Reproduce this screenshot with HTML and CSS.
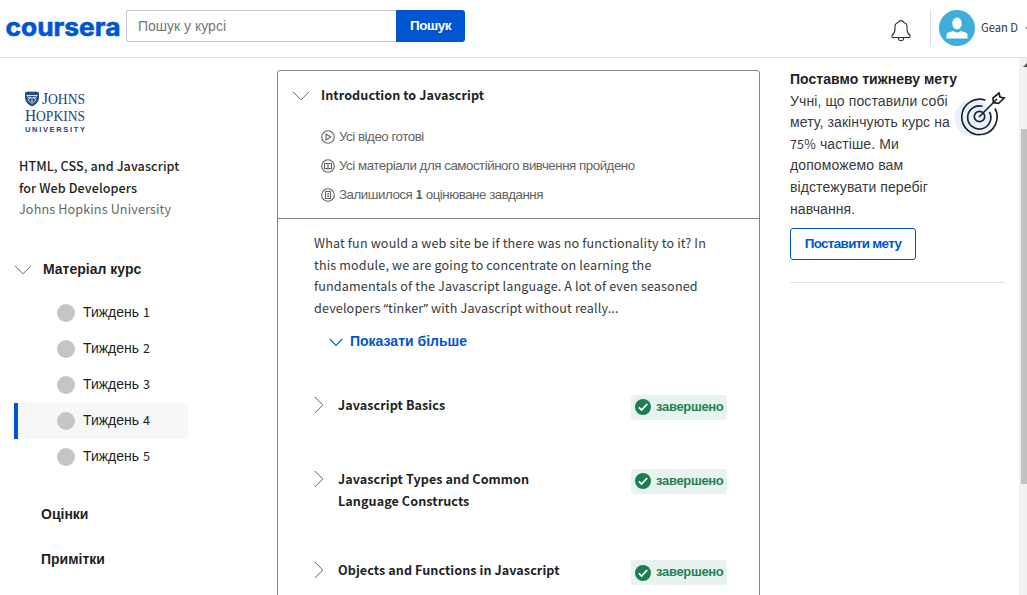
FILE: index.html
```html
<!DOCTYPE html>
<html lang="uk">
<head>
<meta charset="utf-8">
<title>Coursera</title>
<link rel="stylesheet" href="styles.css">
</head>
<body>
<header class="header">
  <svg class="logo" width="116" height="28" viewBox="0 0 116 28"><text x="-.5" y="22.500" textLength="115" lengthAdjust="spacingAndGlyphs">coursera</text></svg>
  <form class="search">
    <div class="search-box">Пошук у курсі</div>
    <div class="search-btn">Пошук</div>
  </form>
  <svg class="bell" width="20" height="22" viewBox="0 0 20 22"><path d="M1 17.5H19M1 17.5V15.5Q4 13 4 9V6.5Q4 3.5 7 2.5Q8 .6 10 .6T13 2.5Q16 3.5 16 6.500V9Q16 13 19 15.500V17.500M7.300 18Q7.600 20.700 10 20.700T12.700 18"/></svg>
  <div class="account">
    <svg class="avatar" width="36" height="36" viewBox="0 0 36 36"><circle cx="18" cy="18" r="18" fill="#3bafda"/><ellipse cx="18" cy="13.500" rx="4.700" ry="6" fill="#fff"/><path d="M7.500 28.500V25Q7.500 22.500 11 22L14.500 21Q18 24 21.500 21L25 22Q28.500 22.500 28.500 25V28.500Z" fill="#fff"/></svg>
    <span class="user">Gean D</span>
    <svg class="caret" width="7" height="5" viewBox="0 0 7 5"><path d="M.5 1L3.500 4L6.500 1"/></svg>
  </div>
</header>
<div class="page">
  <nav class="side">
    <svg class="jhu" width="62" height="42" viewBox="0 0 62 42">
      <path d="M1 1.500Q4 0 8 .8Q12 0 15 1.500V7Q15 12 8 15.500Q1 12 1 7Z" fill="#2a4a85"/>
      <path d="M2.500 4.500H13.500M3 6L7 6.500L4 8.500L6.500 11.500M13 6L9 6.500L12 8.500L9.500 11.500M8 6V13" stroke="#dce3ef" fill="none"/>
      <text class="jhu-name" x="18" y="13" textLength="43" lengthAdjust="spacingAndGlyphs"><tspan>J</tspan><tspan class="cap">OHNS</tspan></text>
      <text class="jhu-name" x="1" y="30" textLength="60" lengthAdjust="spacingAndGlyphs"><tspan>H</tspan><tspan class="cap">OPKINS</tspan></text>
      <text class="jhu-uni" x="1" y="40.500" textLength="60">UNIVERSITY</text>
    </svg>
    <div class="course latin">HTML, CSS, and Javascript<br>for Web Developers</div>
    <div class="school latin">Johns Hopkins University</div>
    <div class="material"><svg class="chev" width="18" height="10" viewBox="0 0 18 10"><path d="M1 .8L9 8.800L17 .8"/></svg><b>Матеріал курс</b></div>
    <ul class="weeks">
      <li><i></i><span>Тиждень <span class="num">1</span></span></li>
      <li><i></i><span>Тиждень <span class="num">2</span></span></li>
      <li><i></i><span>Тиждень <span class="num">3</span></span></li>
      <li class="active"><i></i><span>Тиждень <span class="num">4</span></span></li>
      <li><i></i><span>Тиждень <span class="num">5</span></span></li>
    </ul>
    <div class="link grades">Оцінки</div>
    <div class="link notes">Примітки</div>
  </nav>
  <main class="card">
    <section class="intro">
      <div class="intro-head"><svg class="chev" width="18" height="10" viewBox="0 0 18 10"><path d="M1 .8L9 8.800L17 .8"/></svg><h2 class="latin">Introduction to Javascript</h2></div>
      <div class="stat s1"><svg width="14" height="14" viewBox="0 0 14 14"><circle cx="7" cy="7" r="6.300"/><path d="M5 4V10L9.800 7Z"/></svg><span>Усі відео готові</span></div>
      <div class="stat s2"><svg width="14" height="14" viewBox="0 0 14 14"><circle cx="7" cy="7" r="6.300"/><path d="M3.500 4.500H6L7 5L8 4.500H10.500V9.500H8L7 10L6 9.500H3.500ZM7 5V10"/></svg><span>Усі матеріали для самостійного вивчення пройдено</span></div>
      <div class="stat s3"><svg width="14" height="14" viewBox="0 0 14 14"><circle cx="7" cy="7" r="6.300"/><path d="M4.500 3.500H9.500V10.500H4.500ZM6.200 5.500H8M6.200 7H8M6.200 8.500H8"/></svg><span>Залишилося <b class="num">1</b> оцінюване завдання</span></div>
    </section>
    <section class="body">
      <p class="desc latin">What fun would a web site be if there was no functionality to it? In<br>this module, we are going to concentrate on learning the<br>fundamentals of the Javascript language. A lot of even seasoned<br>developers <span class="quote">“</span>tinker<span class="quote">”</span> with Javascript without really...</p>
      <div class="more"><svg width="14" height="9" viewBox="0 0 14 9"><path d="M.8 1L7 7.500L13.200 1"/></svg><b>Показати більше</b></div>
      <div class="lesson l1"><svg class="chev" width="10" height="18" viewBox="0 0 10 18"><path d="M.8 1L8.800 9L.8 17"/></svg><h3 class="latin">Javascript Basics</h3><span class="badge"><svg width="16" height="16" viewBox="0 0 16 16"><circle cx="8" cy="8" r="8"/><path d="M3.800 8.400L6.600 11L12.200 5"/></svg><b>завершено</b></span></div>
      <div class="lesson l2"><svg class="chev" width="10" height="18" viewBox="0 0 10 18"><path d="M.8 1L8.800 9L.8 17"/></svg><h3 class="latin">Javascript Types and Common<br>Language Constructs</h3><span class="badge"><svg width="16" height="16" viewBox="0 0 16 16"><circle cx="8" cy="8" r="8"/><path d="M3.800 8.400L6.600 11L12.200 5"/></svg><b>завершено</b></span></div>
      <div class="lesson l3"><svg class="chev" width="10" height="18" viewBox="0 0 10 18"><path d="M.8 1L8.800 9L.8 17"/></svg><h3 class="latin">Objects and Functions in Javascript</h3><span class="badge"><svg width="16" height="16" viewBox="0 0 16 16"><circle cx="8" cy="8" r="8"/><path d="M3.800 8.400L6.600 11L12.200 5"/></svg><b>завершено</b></span></div>
    </section>
  </main>
  <aside class="goal">
    <div class="goal-top">
      <div class="goal-text"><b>Поставмо тижневу мету</b><br>Учні, що поставили собі<br>мету, закінчують курс на<br><span class="num">75%</span> частіше. Ми<br>допоможемо вам<br>відстежувати перебіг<br>навчання.</div>
      <svg class="target" width="52" height="48" viewBox="0 0 52 48"><circle cx="18" cy="28" r="18.500" fill="#e8f0fd"/><g fill="none" stroke="#20222c" stroke-width="1.700"><path d="M30.500 10.300A17.700 17.700 0 1 0 40 18.500M27.500 16.300A11.600 11.600 0 1 0 34.500 22"/><circle cx="24.500" cy="26.500" r="5.200"/><path d="M24 27L42 9M38.300 12.600L38 8L44 3L45 7L49.200 8L43.500 13.300L38.300 12.600"/></g></svg>
    </div>
    <div class="goal-btn">Поставити мету</div>
    <hr>
  </aside>
  <div class="scrollbar"><span class="arrow"></span><span class="thumb"></span></div>
</div>
</body>
</html>
```

FILE: styles.css
```css
* { box-sizing: border-box; }
body { margin: 0; height: 595px; overflow: hidden; background: #fff; color: #1f1f1f; font: 14px/21.6px "Liberation Sans", sans-serif; }
svg { display: block; flex: none; overflow: visible; }
h2, h3, p, ul { margin: 0; padding: 0; }
.latin, .num { font-family: "Noto Sans CJK SC", sans-serif; font-size: 12.6px; }
.num { line-height: 1; }
.quote { font-family: "Noto Sans", sans-serif; line-height: 1; }
.header { display: flex; height: 58px; border-bottom: 1px solid #dcdde1; overflow: hidden; }
.logo { margin: 13px 0 0 6px; }
.logo text { font: 700 25px Inter, sans-serif; fill: #0056d2; stroke: #0056d2; stroke-width: .6px; }
.search { display: flex; height: 32px; margin: 10px 0 0 4px; }
.search-box { width: 270px; border: 1px solid #c7c7d9; border-right: 0; border-radius: 3px 0 0 3px; padding-left: 11px; line-height: 31px; color: #757575; white-space: nowrap; }
.search-btn { width: 69px; border-radius: 0 3px 3px 0; background: #0056d2; color: #fff; font-size: 13.5px; font-weight: 700; letter-spacing: -.5px; text-align: center; line-height: 32px; }
.bell { margin: 20px 0 0 426px; }
.bell path, .caret path, .chev path, .more path { fill: none; stroke: #333; stroke-width: 1.1; }
.account { display: flex; margin: 10px 0 0 19px; padding-left: 8px; height: 36px; border-left: 1px solid #dedee4; }
.user { margin-left: 6px; width: 43px; font: 11.2px/35px "Noto Sans CJK SC", sans-serif; color: #333; white-space: nowrap; }
.caret { margin: 16px 0 0 1px; }
.caret path { stroke: #777; }
.page { display: flex; height: 537px; }
.side { width: 277px; flex: none; }
.jhu { margin: 33px 0 0 24px; }
.jhu text { fill: #24427e; }
.jhu-name { font: 17px "Liberation Serif", serif; }
.jhu-name .cap { font-size: 15px; }
.jhu-uni { font: 700 7.500px "Liberation Sans", sans-serif; }
.course { margin: 22px 0 0 19px; font-weight: 500; letter-spacing: .08px; }
.school { margin-left: 19px; color: #666; letter-spacing: .13px; }
.material { display: flex; align-items: center; gap: 11px; margin: 39px 0 0 14px; }
.chev path { stroke: #666; stroke-width: 1; }
.weeks { width: 174px; margin: 15px 0 0 14px; list-style: none; }
.weeks li { display: flex; align-items: center; height: 36px; padding-left: 43px; }
.weeks li > span { margin-top: -2px; }
.weeks i { width: 18px; height: 18px; margin-right: 8px; border-radius: 50%; background: #c4c5c7; }
.weeks .active { border-left: 4px solid #0056d2; padding-left: 39px; background: #f5f7f9; border-radius: 0 3px 3px 0; }
.link { margin-left: 41px; font-weight: 700; }
.grades { margin-top: 29px; }
.notes { margin-top: 23.400px; }
.card { width: 483px; height: 540px; flex: none; margin-top: 12px; border: 1px solid #858589; border-radius: 3px; }
.intro { height: 148px; border-bottom: 1px solid #858589; padding: 15px 0 0 14px; }
.intro-head { display: flex; align-items: center; gap: 11px; }
.intro-head h2 { margin-top: -2px; }
h2, h3 { font-weight: 700; letter-spacing: .07px; }
.stat { display: flex; align-items: center; gap: 4px; height: 29px; margin-left: 29px; color: #636363; font-size: 13.3px; letter-spacing: -.46px; white-space: nowrap; }
.s1 { margin-top: 17px; }
.stat svg { fill: none; stroke: #636363; stroke-width: 1.1; }
.body { padding: 13px 32px 0 36px; }
.desc { color: #373a3c; letter-spacing: .14px; white-space: nowrap; }
.more { display: flex; align-items: center; gap: 7px; margin: 13px 0 0 15px; color: #0056d2; }
.more path { stroke: #0056d2; }
.lesson { display: flex; align-items: flex-start; }
.lesson .chev { margin-top: 1px; }
.lesson h3 { margin: -1px 0 1px 14px; flex: 1; }
.l1 { margin-top: 42px; }
.l2 { margin-top: 49px; }
.l3 { margin-top: 48px; }
.badge { display: flex; align-items: center; gap: 5px; width: 96px; height: 25px; padding-left: 4px; border-radius: 3px; background: #e8f2ee; color: #1f8354; font-size: 13px; letter-spacing: -.32px; }
.badge b { margin-top: -1px; }
.badge circle { fill: #1d7c50; }
.badge path { fill: none; stroke: #fff; stroke-width: 1.8; }
.goal { width: 215px; margin: 11px 0 0 30px; flex: none; }
.goal-top { display: flex; position: relative; }
.goal-text { white-space: nowrap; color: #373a3c; letter-spacing: .1px; }
.goal-text b { color: #1f1f1f; letter-spacing: .03px; }
.target { position: absolute; left: 165px; top: 21px; }
.goal-btn { width: 126px; height: 32px; margin-top: 8px; border: 1px solid #0056d2; border-radius: 3px; color: #0056d2; font-size: 13.4px; font-weight: 700; letter-spacing: -.65px; text-align: center; line-height: 29px; }
hr { border: 0; border-top: 1px solid #e1e1e1; margin: 22px 0 0; }
.scrollbar { width: 8px; margin-left: 14px; padding-left: 2px; background: #f1f1f1; overflow: hidden; flex: none; }
.arrow { display: block; width: 0; margin: 5px 0 0 2px; border: 4px solid transparent; border-top: 0; border-bottom-color: #505050; }
.thumb { display: block; width: 10px; height: 355px; margin-top: 62px; background: #c1c1c1; }
```
